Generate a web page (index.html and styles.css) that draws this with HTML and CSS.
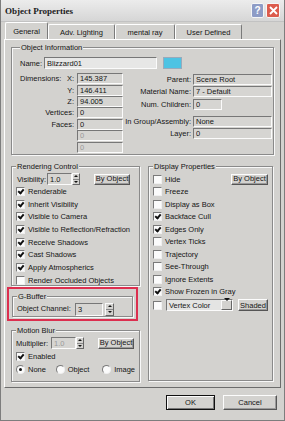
FILE: index.html
```html
<!DOCTYPE html>
<html lang="en">
<head>
  <meta charset="UTF-8">
  <title>Object Properties</title>
  <link rel="stylesheet" href="styles.css">
</head>
<body>
  <div class="window">
    <div class="titlebar">
      <span class="title">Object Properties</span>
      <span class="tbtn help">?</span>
      <span class="tbtn close"><svg width="9" height="9" viewBox="0 0 9 9"><path d="M1 1L8 8M8 1L1 8" stroke="#fff" stroke-width="1.8"/></svg></span>
    </div>
    <div class="content">
      <div class="tabs">
        <div class="tab active">General</div>
        <div class="tab">Adv. Lighting</div>
        <div class="tab">mental ray</div>
        <div class="tab">User Defined</div>
      </div>
      <div class="panel">
        <fieldset class="group info">
          <legend>Object Information</legend>
          <div class="name-row">
            <span class="lbl name-lbl">Name:</span>
            <input class="field name" value="Blizzard01">
            <span class="swatch"></span>
          </div>
          <div class="info-cols">
            <div class="dims">
              <span class="lbl first"><span>Dimensions:</span><span>X:</span></span>
              <input class="field" value="145.387" readonly>
              <span class="lbl">Y:</span>
              <input class="field" value="146.411" readonly>
              <span class="lbl">Z:</span>
              <input class="field" value="94.005" readonly>
              <span class="lbl">Vertices:</span>
              <input class="field" value="0" readonly>
              <span class="lbl">Faces:</span>
              <input class="field" value="0" readonly>
              <span></span>
              <input class="field off" value="0" readonly>
              <span></span>
              <input class="field off" value="0" readonly>
            </div>
            <div class="links">
              <span class="lbl">Parent:</span>
              <input class="field" value="Scene Root" readonly>
              <span class="lbl">Material Name:</span>
              <input class="field" value="7 - Default" readonly>
              <span class="lbl">Num. Children:</span>
              <input class="field short" value="0" readonly>
              <span class="spacer"></span>
              <span class="lbl">In Group/Assembly:</span>
              <input class="field" value="None" readonly>
              <span class="lbl">Layer:</span>
              <input class="field" value="0" readonly>
            </div>
          </div>
        </fieldset>

        <div class="columns">
          <div class="col">
            <fieldset class="group render">
              <legend>Rendering Control</legend>
              <div class="ctl-row">
                <span class="lbl vis-lbl">Visibility:</span>
                <span class="spinner"><input class="field" value="1.0"><span class="arrows"><i class="up"></i><i class="down"></i></span></span>
                <button class="btn by">By Object</button>
              </div>
              <label class="check"><span class="box on"></span>Renderable</label>
              <label class="check"><span class="box on"></span>Inherit Visibility</label>
              <label class="check"><span class="box on"></span>Visible to Camera</label>
              <label class="check"><span class="box on"></span>Visible to Reflection/Refraction</label>
              <label class="check"><span class="box on"></span>Receive Shadows</label>
              <label class="check"><span class="box on"></span>Cast Shadows</label>
              <label class="check"><span class="box on"></span>Apply Atmospherics</label>
              <label class="check"><span class="box"></span>Render Occluded Objects</label>
            </fieldset>

            <div class="mark">
              <fieldset class="group gbuf">
                <legend>G-Buffer</legend>
                <div class="ctl-row">
                  <span class="lbl ch-lbl">Object Channel:</span>
                  <span class="spinner ch"><input class="field" value="3"><span class="arrows"><i class="up"></i><i class="down"></i></span></span>
                </div>
              </fieldset>
            </div>

            <fieldset class="group blur">
              <legend>Motion Blur</legend>
              <div class="ctl-row">
                <span class="lbl mul-lbl">Multiplier:</span>
                <span class="spinner"><input class="field off" value="1.0" readonly><span class="arrows"><i class="up"></i><i class="down"></i></span></span>
                <button class="btn by">By Object</button>
              </div>
              <label class="check"><span class="box on"></span>Enabled</label>
              <div class="radios">
                <label class="radio-item"><span class="radio on"></span>None</label>
                <label class="radio-item"><span class="radio"></span>Object</label>
                <label class="radio-item"><span class="radio"></span>Image</label>
              </div>
            </fieldset>
          </div>

          <fieldset class="group display">
            <legend>Display Properties</legend>
            <div class="check-row">
              <label class="check"><span class="box"></span>Hide</label>
              <button class="btn by2">By Object</button>
            </div>
            <label class="check"><span class="box"></span>Freeze</label>
            <label class="check"><span class="box"></span>Display as Box</label>
            <label class="check"><span class="box on"></span>Backface Cull</label>
            <label class="check"><span class="box on"></span>Edges Only</label>
            <label class="check"><span class="box"></span>Vertex Ticks</label>
            <label class="check"><span class="box"></span>Trajectory</label>
            <label class="check"><span class="box"></span>See-Through</label>
            <label class="check"><span class="box"></span>Ignore Extents</label>
            <label class="check"><span class="box on"></span>Show Frozen in Gray</label>
            <div class="check-row vc">
              <span class="box"></span>
              <span class="select">Vertex Color<span class="drop"><i class="down"></i></span></span>
              <button class="btn shaded">Shaded</button>
            </div>
          </fieldset>
        </div>
      </div>

      <div class="footer">
        <button class="btn default ok">OK</button>
        <button class="btn cancel">Cancel</button>
      </div>
    </div>
  </div>
</body>
</html>
```

FILE: styles.css
```css
* {
  box-sizing: border-box;
}
body {
  margin: 0;
  background: #d3d2cf;
  font-family: "Liberation Sans", Arial, sans-serif;
  font-size: 7.5px;
  color: #151515;
}
.window {
  width: 285px;
  height: 421px;
  border: 1px solid #7d7d7d;
  border-top: none;
  background: #d3d2cf;
}
.titlebar {
  height: 22px;
  display: flex;
  align-items: center;
  padding: 0 4px;
  background: linear-gradient(#ececec, #d6d6d6);
  border-bottom: 1px solid #c2c2c2;
}
.title {
  flex: 1;
  font-family: "Liberation Serif", serif;
  font-weight: bold;
  font-size: 9px;
  color: #1c1c1c;
}
.tbtn {
  height: 15px;
  border: 1px solid #f6f6f6;
  border-radius: 2px;
  display: flex;
  align-items: center;
  justify-content: center;
}
.help {
  width: 13px;
  margin-right: 2px;
  background: #8e9cc6;
  color: #fff;
  font-weight: bold;
  font-size: 10px;
}
.close {
  width: 14px;
  background: #dc5b4c;
}

.content {
  padding: 0 3px;
}
.tabs {
  display: flex;
  align-items: flex-end;
  height: 17px;
  padding-left: 1px;
}
.tab {
  height: 15px;
  display: flex;
  align-items: center;
  justify-content: center;
  border: 1px solid;
  border-color: #fff #7a7a7a transparent #fff;
  border-bottom: none;
  border-radius: 2px 2px 0 0;
}
.tab.active {
  height: 17px;
}
.tab:nth-child(1) { width: 43px; }
.tab:nth-child(2) { width: 67px; }
.tab:nth-child(3) { width: 60px; }
.tab:nth-child(4) { width: 67px; }

.panel {
  height: 349px;
  border: 1px solid;
  border-color: #fff #6c6c6c #6c6c6c #fff;
  padding: 3px 6px 0;
}

.group {
  margin: 0;
  padding: 0 4px;
  min-width: 0;
  border: 1px solid #8a8a8a;
  box-shadow: inset 1px 1px 0 #f8f8f8, 1px 1px 0 #f8f8f8;
}
.group legend {
  padding: 0 1px;
  line-height: 9px;
  background: #d3d2cf;
}

.lbl {
  white-space: nowrap;
}
.field {
  height: 11px;
  margin: 0;
  padding: 0 2px;
  font: inherit;
  color: #151515;
  background: #d6d5d2;
  border: 1px solid;
  border-color: #777 #fbfbfb #fbfbfb #777;
  outline: none;
}
.field.off {
  color: #9a9a9a;
}

/* object information */
.info {
  height: 112px;
  padding: 0 1px 0 8px;
}
.name-row {
  display: flex;
  align-items: center;
  margin-top: 5px;
  height: 12px;
}
.name-lbl {
  width: 24px;
}
.field.name {
  width: 113px;
  height: 12px;
  background: #e7e7e6;
}
.swatch {
  width: 19px;
  height: 12px;
  margin-left: 6px;
  background: #4ec3e3;
  border: 1px solid #9ab;
}
.info-cols {
  display: flex;
  margin-top: 4px;
}
.dims {
  width: 103px;
  display: grid;
  grid-template-columns: 54px 46px;
  grid-auto-rows: 11.43px;
  column-gap: 3px;
  align-items: center;
}
.dims .lbl {
  text-align: right;
}
.dims .lbl.first {
  display: flex;
  justify-content: space-between;
}
.links {
  display: grid;
  grid-template-columns: 68px 79px;
  grid-template-rows: repeat(3, 12.5px) 4.5px repeat(2, 12.5px);
  column-gap: 2px;
  align-items: center;
}
.links .lbl {
  text-align: right;
}
.links .spacer {
  grid-column: span 2;
}
.field.short {
  width: 29px;
}
.dims .field,
.links .field {
  min-width: 0;
}

/* columns */
.columns {
  display: flex;
  gap: 8px;
  margin-top: 7px;
}
.col {
  width: 129px;
  display: flex;
  flex-direction: column;
}
.render {
  height: 124px;
}
.ctl-row {
  display: flex;
  align-items: center;
  height: 12px;
  margin-top: 2px;
}
.vis-lbl {
  width: 31px;
  padding-left: 1px;
}
.mul-lbl {
  width: 35px;
}
.ch-lbl {
  width: 58px;
}
.spinner {
  display: flex;
  height: 12px;
}
.spinner .field {
  width: 25px;
  height: 12px;
}
.spinner.ch .field {
  width: 28px;
  height: 13px;
}
.arrows {
  width: 8px;
  display: flex;
  flex-direction: column;
  border: 1px solid;
  border-color: #fafafa #666 #666 #fafafa;
}
.spinner.ch .arrows {
  width: 9px;
  height: 13px;
  margin-left: 2px;
}
.arrows i {
  flex: 1;
  display: flex;
  align-items: center;
  justify-content: center;
}
i.up::after,
i.down::after {
  content: "";
  border-left: 2px solid transparent;
  border-right: 2px solid transparent;
}
i.up::after {
  border-bottom: 2px solid #111;
}
i.down::after {
  border-top: 2px solid #111;
}
.arrows i.up {
  border-bottom: 1px solid #888;
}

.btn {
  margin: 0;
  padding: 0;
  font: inherit;
  color: #151515;
  background: #d3d2cf;
  border: 1px solid;
  border-color: #fcfcfc #555 #555 #fcfcfc;
  box-shadow: inset -1px -1px 0 #9a9a9a;
}
.btn.by {
  width: 36px;
  height: 11px;
  margin-left: 14px;
  line-height: 8px;
}
.btn.by2 {
  width: 37px;
  height: 11px;
  line-height: 8px;
}

.check {
  display: flex;
  align-items: center;
  gap: 3px;
  height: 12.7px;
  white-space: nowrap;
}
.box {
  position: relative;
  width: 9px;
  height: 9px;
  flex: none;
  background: #fbfbfb;
  border: 1px solid;
  border-color: #7a7a7a #f0f0f0 #f0f0f0 #7a7a7a;
}
.box.on::after {
  content: "";
  position: absolute;
  left: 2px;
  top: 0;
  width: 2px;
  height: 4px;
  border: solid #111;
  border-width: 0 2px 2px 0;
  transform: rotate(40deg);
}

.mark {
  margin: 1px 2px 0 -4px;
  border: 2px solid #dc2f4f;
  padding: 3px 3px 2px;
}
.gbuf {
  height: 25px;
}
.gbuf .ctl-row {
  height: 13px;
  margin-top: 1px;
}

.blur {
  height: 56px;
  margin-top: 5px;
}
.blur .check {
  height: 13px;
  margin-top: 0.5px;
}
.radios {
  display: flex;
  height: 13px;
}
.radio-item {
  display: flex;
  align-items: center;
  gap: 3px;
}
.radio-item:nth-child(1) { width: 41px; }
.radio-item:nth-child(2) { width: 48px; }
.radio {
  position: relative;
  width: 9px;
  height: 9px;
  border-radius: 50%;
  background: #fbfbfb;
  border: 1px solid;
  border-color: #7a7a7a #eee #eee #7a7a7a;
}
.radio.on::after {
  content: "";
  position: absolute;
  left: 2px;
  top: 2px;
  width: 3px;
  height: 3px;
  border-radius: 50%;
  background: #111;
}

.display {
  width: 125px;
  height: 219px;
}
.display .check {
  height: 12.5px;
}
.check-row {
  display: flex;
  align-items: center;
  justify-content: space-between;
  height: 12.5px;
  margin-top: 2px;
}
.check-row.vc {
  height: 14px;
  margin-top: 0;
  justify-content: flex-start;
}
.select {
  display: flex;
  align-items: center;
  justify-content: space-between;
  width: 67px;
  height: 12px;
  margin-left: 4px;
  padding-left: 2px;
  background: #e4e4e3;
  border: 1px solid;
  border-color: #777 #fbfbfb #fbfbfb #777;
}
.drop {
  width: 11px;
  height: 10px;
  display: flex;
  align-items: center;
  justify-content: center;
  background: #d3d2cf;
  border: 1px solid;
  border-color: #fafafa #666 #666 #fafafa;
}
.drop i.down::after {
  border-left-width: 3px;
  border-right-width: 3px;
  border-top-width: 3px;
}
.btn.shaded {
  width: 30px;
  height: 12px;
  margin-left: 5px;
}

.footer {
  display: flex;
  justify-content: flex-end;
  gap: 8px;
  padding: 7px 4px 0 0;
}
.footer .btn {
  height: 15px;
}
.btn.ok {
  width: 49px;
}
.btn.cancel {
  width: 54px;
}
.btn.default {
  border: 1px solid #111;
  box-shadow: inset 1px 1px 0 #fcfcfc, inset -1px -1px 0 #777;
}
```
